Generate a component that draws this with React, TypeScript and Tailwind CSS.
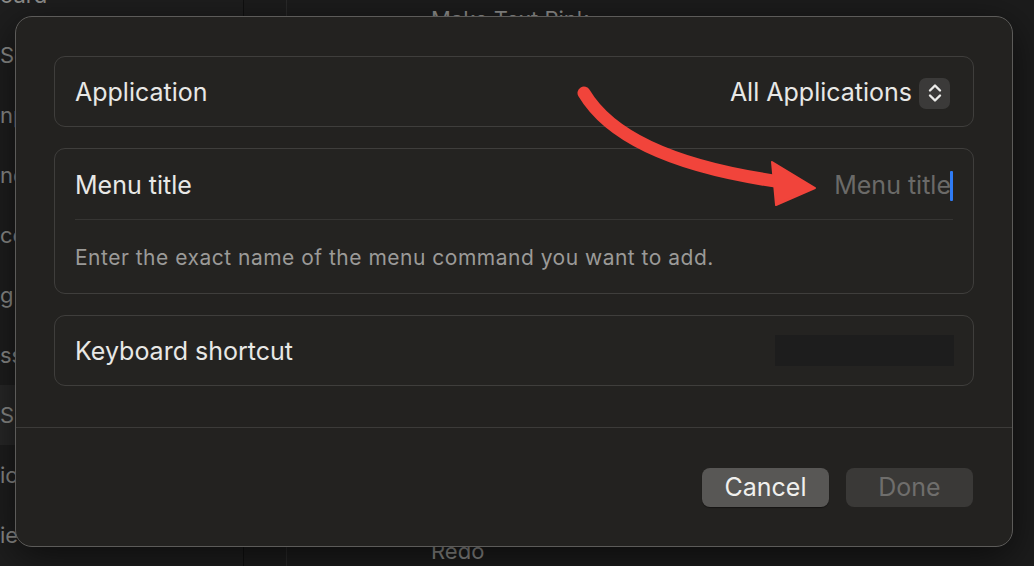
import React from 'react'

const sidebarRows = ['oard', 'Sou', 'nput', 'nd', 'ce', 'g', 'ss', 'Sh', 'ic', 'ie']

const Stepper: React.FC = () => (
  <div className="flex h-[31px] w-[31px] items-center justify-center rounded-[7px] bg-[#3b3a39]">
    <svg width="16" height="22" viewBox="0 0 16 22" fill="none" stroke="#ececea" strokeWidth="2.4" strokeLinecap="round" strokeLinejoin="round">
      <path d="M3 8.5 L8 3.5 L13 8.5" />
      <path d="M3 13.5 L8 18.5 L13 13.5" />
    </svg>
  </div>
)

const Panel: React.FC<{ children: React.ReactNode }> = ({ children }) => (
  <div className="rounded-[11px] border border-[#3f3e3c] bg-[#242321]">{children}</div>
)

const App: React.FC = () => {
  return (
    <div
      className="relative h-[566px] w-[1034px] overflow-hidden bg-[#1c1c1c]"
      style={{ fontFamily: 'Inter, "Noto Sans", sans-serif' }}
    >
      {/* window behind the sheet */}
      <div className="flex h-full">
        <div className="flex w-[243px] flex-col bg-[#1e1e1e]">
          {sidebarRows.map((name, i) => (
            <div
              key={name}
              className={`flex h-[60px] shrink-0 items-center whitespace-nowrap text-[22px] text-[#8d8d8b] ${i === 0 ? '-mt-[35px]' : ''} ${i === 7 ? 'bg-[#282828]' : ''}`}
            >
              {name}
            </div>
          ))}
        </div>
        <div className="w-px bg-[#101010]" />
        <div className="w-[42px] bg-[#1c1c1c]" />
        <div className="w-px bg-[#2a2a2a]" />
        <div className="flex flex-1 flex-col justify-between pl-[144px]">
          <div className="mt-[3px] text-[22px] text-[#8d8d8b]">Make Text Pink</div>
          <div className="-mb-[2px] text-[22px] text-[#8d8d8b]">Redo</div>
        </div>
      </div>

      {/* sheet */}
      <div className="absolute left-[15px] top-[16px] flex h-[531px] w-[998px] flex-col rounded-[17px] border border-[#5c5b59] bg-[#232220] shadow-[0_10px_40px_rgba(0,0,0,0.6)]">
        <div className="flex flex-col gap-[21px] px-[38px] pt-[39px]">
          <Panel>
            <div className="flex h-[69px] items-center justify-between pl-[20px] pr-[23px] pt-[3px]">
              <span className="text-[25px] text-[#e8e8e6]">Application</span>
              <div className="flex items-center gap-[7px]">
                <span className="text-[25px] text-[#e8e8e6]">All Applications</span>
                <Stepper />
              </div>
            </div>
          </Panel>

          <Panel>
            <div className="px-[20px]">
              <div className="flex h-[71px] items-center justify-between border-b border-[#363533] pt-[3px]">
                <span className="text-[25px] text-[#e8e8e6]">Menu title</span>
                <div className="flex items-center">
                  <span className="text-[25px] text-[#6b6a68]">Menu title</span>
                  <span className="-ml-[1px] h-[30px] w-[3px] rounded-[1px] bg-[#2f7cf6]" />
                </div>
              </div>
              <div className="flex h-[73px] items-center pt-[2px] text-[21px] tracking-[0.5px] text-[#9b9a98]">
                Enter the exact name of the menu command you want to add.
              </div>
            </div>
          </Panel>

          <Panel>
            <div className="flex h-[69px] items-center justify-between pl-[20px] pr-[19px]">
              <span className="pt-[2px] text-[25px] text-[#e8e8e6]">Keyboard shortcut</span>
              <div className="h-[31px] w-[179px] bg-[#1d1d1d]" />
            </div>
          </Panel>
        </div>

        <div className="mt-[41px] h-px bg-[#3c3b39]" />

        <div className="flex justify-end gap-[17px] px-[39px] pt-[40px]">
          <button className="h-[39px] w-[127px] rounded-[8px] bg-[#585755] text-[25px] text-[#f0f0ee] shadow-[0_1px_1px_rgba(0,0,0,0.4)]">
            Cancel
          </button>
          <button className="h-[39px] w-[127px] rounded-[8px] bg-[#3a3937] text-[25px] text-[#6f6e6c]">
            Done
          </button>
        </div>
      </div>

      {/* annotation arrow */}
      <svg className="pointer-events-none absolute left-0 top-0" width="1034" height="566" viewBox="0 0 1034 566">
        <path d="M584 93 C 612 140, 680 168, 782 182" fill="none" stroke="#f1443b" strokeWidth="13" strokeLinecap="round" />
        <path d="M772 162 L815 188 L776 205 Z" fill="#f1443b" stroke="#f1443b" strokeWidth="2" strokeLinejoin="round" />
      </svg>
    </div>
  )
}

export default App
